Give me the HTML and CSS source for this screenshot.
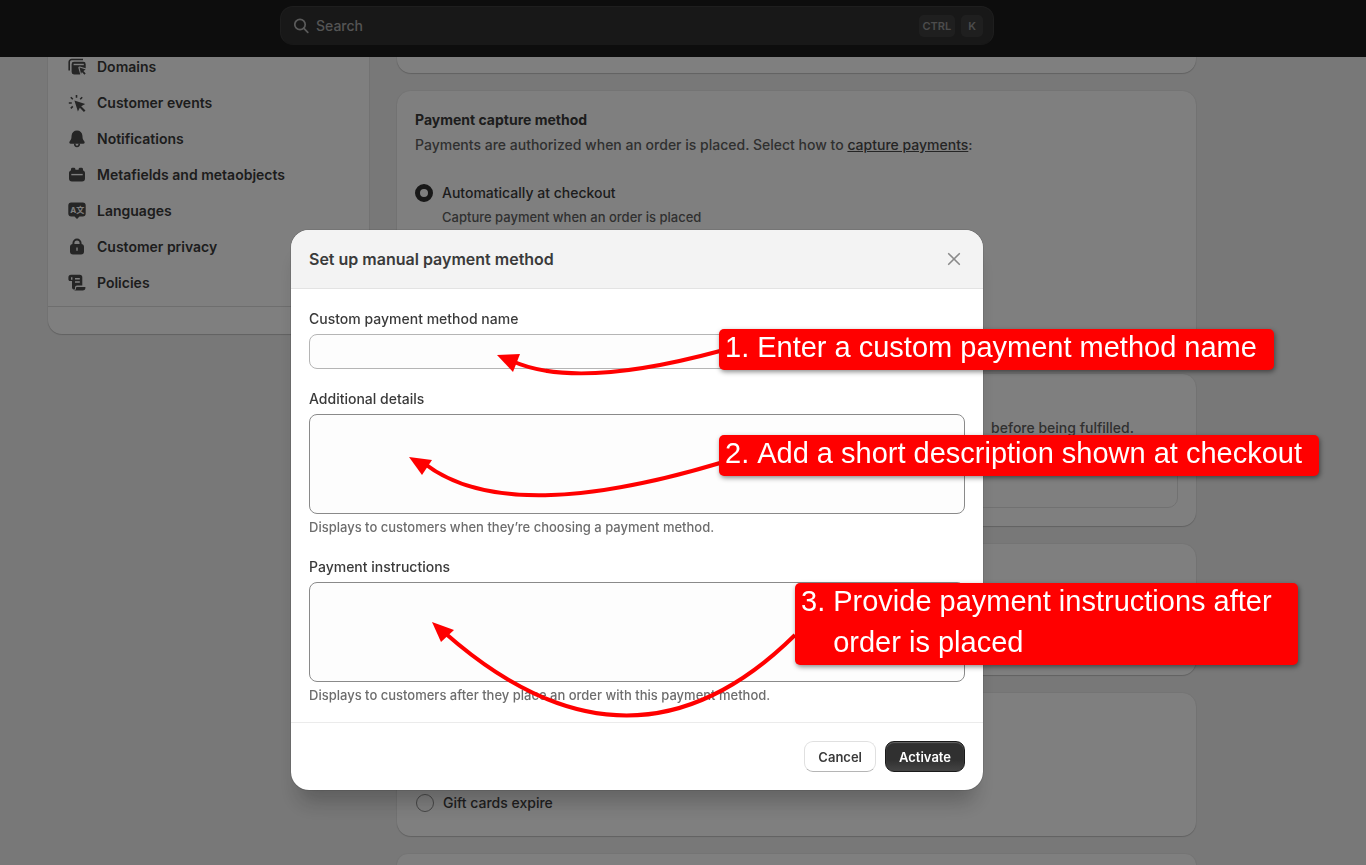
FILE: index.html
```html
<!DOCTYPE html>
<html lang="en">
<head>
  <meta charset="UTF-8">
  <meta name="viewport" content="width=device-width, initial-scale=1.0">
  <title>Payment settings</title>
  <link rel="stylesheet" href="styles.css">
</head>
<body>

  <header class="topbar">
    <div class="search">
      <svg class="search-icon" viewBox="0 0 16 16" aria-hidden="true">
        <circle cx="6" cy="6.500" r="5.200"/>
        <path d="M9.900 10.400L13.800 14.300"/>
      </svg>
      <input type="search" class="search-input" placeholder="Search" aria-label="Search">
      <kbd>CTRL</kbd>
      <kbd>K</kbd>
    </div>
  </header>

  <div class="workspace">
    <nav class="sidebar" aria-label="Settings">
      <ul class="nav-list">
        <li><a href="#">
          <svg class="nav-icon" viewBox="0 0 18 18" aria-hidden="true">
            <path class="line" d="M1.200 12.500V4a2.500 2.500 0 0 1 2.500-2.500H15"/>
            <path d="M3.600 6.200A2.400 2.400 0 0 1 6 3.800h9.300A2.400 2.400 0 0 1 17.700 6.200V10.200L12 8.500a1.300 1.300 0 0 0-1.600 1.600l1.900 6.400H6A2.400 2.400 0 0 1 3.600 14.100z"/>
            <path class="cut" d="M5.600 6.500h10.200"/>
            <path d="M11.600 9.600l6.100 1.900-2.300 1.400 2.300 2.500-1.300 1.300-2.500-2.600-.9 2z"/>
          </svg>
          Domains</a></li>
        <li><a href="#">
          <svg class="nav-icon" viewBox="0 0 18 18" aria-hidden="true">
            <path class="line" d="M8.500 1v2.800M2.800 3.200l2 2M14.200 3.200l-2 2M.8 9h3M2.800 14.400l2-2"/>
            <path d="M6.400 6.400l10.800 3.700-4 2.100 4.300 4.200-1.600 1.600-4.100-4.300-1.900 3.800z"/>
          </svg>
          Customer events</a></li>
        <li><a href="#">
          <svg class="nav-icon" viewBox="0 0 18 18" aria-hidden="true">
            <path d="M9 .5c3.100 0 5.200 2 5.400 5.100l.2 2.200c.1 1.300.7 2.200 1.500 3.100 1 1.200.8 2.800-.9 2.800H2.800c-1.700 0-1.900-1.600-.9-2.800.8-.9 1.400-1.800 1.500-3.100l.2-2.200C3.800 2.500 5.900.5 9 .5z"/>
            <path class="line" d="M6.700 13.500c0 4 4.600 4 4.600 0"/>
          </svg>
          Notifications</a></li>
        <li><a href="#">
          <svg class="nav-icon" viewBox="0 0 18 18" aria-hidden="true">
            <path d="M3 4.500V3.300C3 2 3.800 1.700 5.200 1.700S7.400 2 7.400 3.300v.5h3.200v-.5c0-1.300.8-1.600 2.200-1.600s2.200.3 2.200 1.600v1.200c1.300.3 2 1.300 2 2.500v5.500a3 3 0 0 1-3 3H4a3 3 0 0 1-3-3V7c0-1.200.7-2.200 2-2.500z"/>
            <path class="cut" d="M3.300 8.600h11.400"/>
          </svg>
          Metafields and metaobjects</a></li>
        <li><a href="#">
          <svg class="nav-icon" viewBox="0 0 18 18" aria-hidden="true">
            <path d="M3.300.6h11.400a3 3 0 0 1 3 3v7.900a3 3 0 0 1-3 3h-3.200L9 17l-2.500-2.500H3.300a3 3 0 0 1-3-3V3.600a3 3 0 0 1 3-3z"/>
            <text x="2.200" y="11">A</text>
            <text x="8.200" y="11">文</text>
          </svg>
          Languages</a></li>
        <li><a href="#">
          <svg class="nav-icon" viewBox="0 0 18 18" aria-hidden="true">
            <path class="line thick" d="M5.400 7.500V5.200a3.600 3.600 0 0 1 7.200 0v2.300"/>
            <rect x="2" y="6" width="14" height="10.500" rx="3"/>
            <path class="cut" d="M9 9.500v3.200"/>
          </svg>
          Customer privacy</a></li>
        <li><a href="#">
          <svg class="nav-icon" viewBox="0 0 18 18" aria-hidden="true">
            <path d="M3 .8h8.800a2.500 2.500 0 0 1 2.500 2.500v8.200h-5.300a2 2 0 0 0-2 2v1.700a1.900 1.900 0 0 1-3-1.600V7H2.200C1 7 .4 6.200.4 5.200V3.400A2.600 2.600 0 0 1 3 .8z"/>
            <path d="M9.200 12.900h8.200v.9a2.700 2.700 0 0 1-2.700 2.700H5.600c1.900 0 2.400-1 2.400-2.400 0-.7.500-1.200 1.200-1.200z"/>
            <path class="cut" d="M7 4.800h4.800M7 8h4.800M3.700 3.200v2.600"/>
          </svg>
          Policies</a></li>
      </ul>
      <div class="sidebar-footer"></div>
    </nav>

    <main class="content">
      <section class="card card-stub"></section>

      <section class="card card-capture">
        <h2>Payment capture method</h2>
        <p class="card-text">Payments are authorized when an order is placed. Select how to <a href="#">capture payments</a>:</p>
        <div class="option">
          <input type="radio" id="auto" name="capture" checked>
          <label for="auto">Automatically at checkout</label>
        </div>
        <p class="option-hint">Capture payment when an order is placed</p>
      </section>

      <section class="card card-manual">
        <p class="card-text">before being fulfilled.</p>
        <div class="method-box"></div>
      </section>

      <section class="card card-short"></section>

      <section class="card card-gift">
        <div class="option">
          <input type="radio" id="expire" name="gift">
          <label for="expire">Gift cards expire</label>
        </div>
      </section>

      <section class="card card-last"></section>
    </main>
  </div>

  <div class="backdrop">
    <form class="modal" role="dialog" aria-labelledby="modalTitle">
      <div class="modal-header">
        <h1 id="modalTitle">Set up manual payment method</h1>
        <button type="button" class="close" aria-label="Close">
          <svg viewBox="0 0 14 14" aria-hidden="true"><path d="M1.700 1.700l10.600 10.600M12.300 1.700l-10.600 10.600"/></svg>
        </button>
      </div>

      <div class="modal-body">
        <div class="field">
          <label for="methodName">Custom payment method name</label>
          <input type="text" id="methodName">
        </div>
        <div class="field">
          <label for="details">Additional details</label>
          <textarea id="details" aria-describedby="detailsHint"></textarea>
          <p class="hint" id="detailsHint">Displays to customers when they’re choosing a payment method.</p>
        </div>
        <div class="field">
          <label for="instructions">Payment instructions</label>
          <textarea id="instructions" aria-describedby="instructionsHint"></textarea>
          <p class="hint" id="instructionsHint">Displays to customers after they place an order with this payment method.</p>
        </div>
      </div>

      <div class="modal-footer">
        <button type="button" class="btn">Cancel</button>
        <button type="submit" class="btn btn-primary">Activate</button>
      </div>

      <!-- Arrows from the callouts to the fields -->
      <svg class="arrows" viewBox="0 0 692 560" aria-hidden="true">
        <path d="M221 131Q285 160 429 121"/>
        <path d="M134 234Q216 297 429 233"/>
        <path d="M154 403Q340 567 504 405"/>
        <polygon points="206,125 229,124 222,142"/>
        <polygon points="118,227 141,230 131,245"/>
        <polygon points="141,392 163,400 150,412"/>
      </svg>

      <div class="callout callout-name"><span>1.</span><p>Enter a custom payment method name</p></div>
      <div class="callout callout-details"><span>2.</span><p>Add a short description shown at checkout</p></div>
      <div class="callout callout-instructions"><span>3.</span><p>Provide payment instructions after order is placed</p></div>
    </form>
  </div>

</body>
</html>
```
FILE: styles.css
```css
/* Reset styling */
* {
  margin: 0;
  padding: 0;
  box-sizing: border-box;
}

body {
  font-family: Inter, "Liberation Sans", sans-serif;
  font-size: 14px;
  font-weight: 500;
  line-height: 20px;
  color: #3a3a3a;
  background: #f1f1f1;
}

input,
textarea,
button {
  font: inherit;
  color: inherit;
}

/* Top bar */
.topbar {
  position: relative;
  z-index: 1;
  display: flex;
  justify-content: center;
  background: #1a1a1a;
  padding: 6px 92px 12px 0;
}

.search {
  display: flex;
  align-items: center;
  gap: 6px;
  width: 100%;
  max-width: 714px;
  height: 39px;
  padding: 0 10px 0 13px;
  background: #303030;
  border: 1px solid #3c3c3c;
  border-bottom-color: #303030;
  border-radius: 13px;
}

.search-icon {
  width: 16px;
  height: 16px;
  fill: none;
  stroke: #b5b5b5;
  stroke-width: 1.7;
  stroke-linecap: round;
}

.search-input {
  flex: 1;
  background: none;
  border: none;
  outline: none;
}

.search-input::placeholder {
  color: #a8a8a8;
}

kbd {
  font-family: inherit;
  font-size: 11px;
  font-weight: 600;
  color: #989898;
  background: #3f3f3f;
  border-radius: 5px;
  padding: 1px 4px;
}

kbd:last-child {
  padding: 1px 7px;
}

/* Page is scrolled a little under the top bar */
.workspace {
  display: flex;
  align-items: flex-start;
  gap: 28px;
  margin-top: -8px;
  padding: 0 170px 0 48px;
}

.sidebar,
.card {
  background: white;
  box-shadow: 0 1px 1px rgba(26, 26, 26, 0.18), 0 0 2px rgba(26, 26, 26, 0.12);
}

.sidebar {
  width: 321px;
  flex-shrink: 0;
  border-radius: 0 0 14px 14px;
}

.nav-list {
  list-style: none;
  padding-bottom: 5px;
}

.nav-list a {
  display: flex;
  align-items: center;
  gap: 11px;
  height: 36px;
  padding-left: 20px;
  font-weight: 600;
  color: #3a3a3a;
  text-decoration: none;
}

.nav-icon {
  width: 18px;
  height: 18px;
  fill: #4a4a4a;
}

.nav-icon .line {
  fill: none;
  stroke: #4a4a4a;
  stroke-width: 1.6;
}

.nav-icon .thick {
  stroke-width: 2;
}

.nav-icon .cut {
  fill: none;
  stroke: white;
  stroke-width: 1.4;
}

.nav-icon text {
  font: 700 8px Inter, "Noto Sans CJK SC", sans-serif;
  fill: white;
}

.sidebar-footer {
  height: 28px;
  border-top: 1px solid #dcdcdc;
}

.content {
  flex: 1;
  display: flex;
  flex-direction: column;
  gap: 18px;
}

.card {
  padding: 18px;
  border-radius: 14px;
}

.card-stub {
  padding-bottom: 6px;
  border-radius: 0 0 14px 14px;
}

.card-capture {
  min-height: 265px;
}

.card-manual {
  display: flex;
  flex-direction: column;
  align-items: flex-end;
  gap: 20px;
  padding-top: 44px;
}

.card-manual .card-text {
  padding-right: 44px;
  margin: 0;
}

.method-box {
  width: 100%;
  height: 50px;
  border: 1px solid #e3e3e3;
  border-radius: 10px;
}

.card-short {
  min-height: 131px;
}

.card-gift {
  min-height: 143px;
  display: flex;
  align-items: flex-end;
  padding: 19px 19px 23px;
}

/* Cut off by the bottom of the window */
.card-last {
  min-height: 11px;
  padding: 0;
  border-radius: 14px 14px 0 0;
}

.card h2 {
  font-size: 14px;
  font-weight: 700;
  line-height: 22px;
}

.card-text {
  margin-top: 4px;
  color: #616161;
}

.card-text a {
  color: #4a4a4a;
}

.card-capture .option {
  margin-top: 28px;
}

.option {
  display: flex;
  align-items: center;
  gap: 9px;
}

.option input {
  appearance: none;
  width: 18px;
  height: 18px;
  border: 1px solid #8a8a8a;
  border-radius: 50%;
}

.option input:checked {
  border: 5px solid #303030;
}

.option-hint {
  margin: 4px 0 0 27px;
  font-size: 13px;
  color: #616161;
}

/* Modal */
.backdrop {
  position: fixed;
  inset: 0;
  z-index: 2;
  display: flex;
  justify-content: center;
  align-items: flex-start;
  padding: 230px 92px 0 0;
  background: rgba(0, 0, 0, 0.5);
}

.modal {
  position: relative;
  width: 100%;
  max-width: 692px;
  background: white;
  border-radius: 18px;
  box-shadow: 0 20px 20px -8px rgba(26, 26, 26, 0.28), 0 0 1px #1a1a1a;
}

.modal-header {
  display: flex;
  align-items: center;
  justify-content: space-between;
  height: 59px;
  padding: 0 18px;
  background: #f3f3f3;
  border-bottom: 1px solid #e3e3e3;
  border-radius: 18px 18px 0 0;
}

.modal-header h1 {
  font-size: 16px;
  font-weight: 600;
}

.close {
  width: 22px;
  height: 22px;
  background: none;
  border: none;
  cursor: pointer;
}

.close svg {
  display: block;
  width: 14px;
  height: 14px;
  margin: auto;
  fill: none;
  stroke: #8a8a8a;
  stroke-width: 1.6;
  stroke-linecap: round;
}

.modal-body {
  display: flex;
  flex-direction: column;
  gap: 20px;
  padding: 20px 18px 17px;
}

.field label {
  display: block;
  margin-bottom: 5px;
}

.field input,
.field textarea {
  display: block;
  width: 100%;
  height: 35px;
  padding: 7px 12px;
  background: #fdfdfd;
  border: 1px solid #b5b5b5;
  border-radius: 8px;
}

.field textarea {
  height: 100px;
  border-color: #8a8a8a;
  resize: none;
}

.hint {
  margin-top: 4px;
  font-size: 13px;
  line-height: 19px;
  color: #6d6d6d;
}

.modal-footer {
  display: flex;
  justify-content: flex-end;
  gap: 9px;
  padding: 18px;
  border-top: 1px solid #ebebeb;
}

.btn {
  height: 31px;
  padding: 0 13px;
  font-size: 13px;
  font-weight: 600;
  background: white;
  border: 1px solid #e0e0e0;
  border-bottom-color: #b5b5b5;
  border-radius: 9px;
  cursor: pointer;
}

.btn-primary {
  color: white;
  background: linear-gradient(#303030 60%, #444);
  border-color: #1a1a1a;
  box-shadow: inset 0 1px 1px #666;
}

/* Callouts */
.arrows {
  position: absolute;
  left: 0;
  top: 0;
  width: 692px;
  height: 560px;
  fill: red;
  pointer-events: none;
}

.arrows path {
  fill: none;
  stroke: red;
  stroke-width: 4;
}

.callout {
  position: absolute;
  display: flex;
  gap: 8px;
  padding: 0 17px 0 6px;
  font-family: "Liberation Sans", Arial, sans-serif;
  font-size: 29px;
  font-weight: 400;
  line-height: 41px;
  color: white;
  background: red;
  border-radius: 5px;
  box-shadow: 1px 2px 5px rgba(0, 0, 0, 0.45);
  white-space: nowrap;
}

.callout span,
.callout p {
  margin: -2px 0 2px;
}

.callout-name {
  left: 428px;
  top: 99px;
}

.callout-details {
  left: 428px;
  top: 205px;
}

.callout-instructions {
  left: 504px;
  top: 353px;
  width: 503px;
  white-space: normal;
}
```
